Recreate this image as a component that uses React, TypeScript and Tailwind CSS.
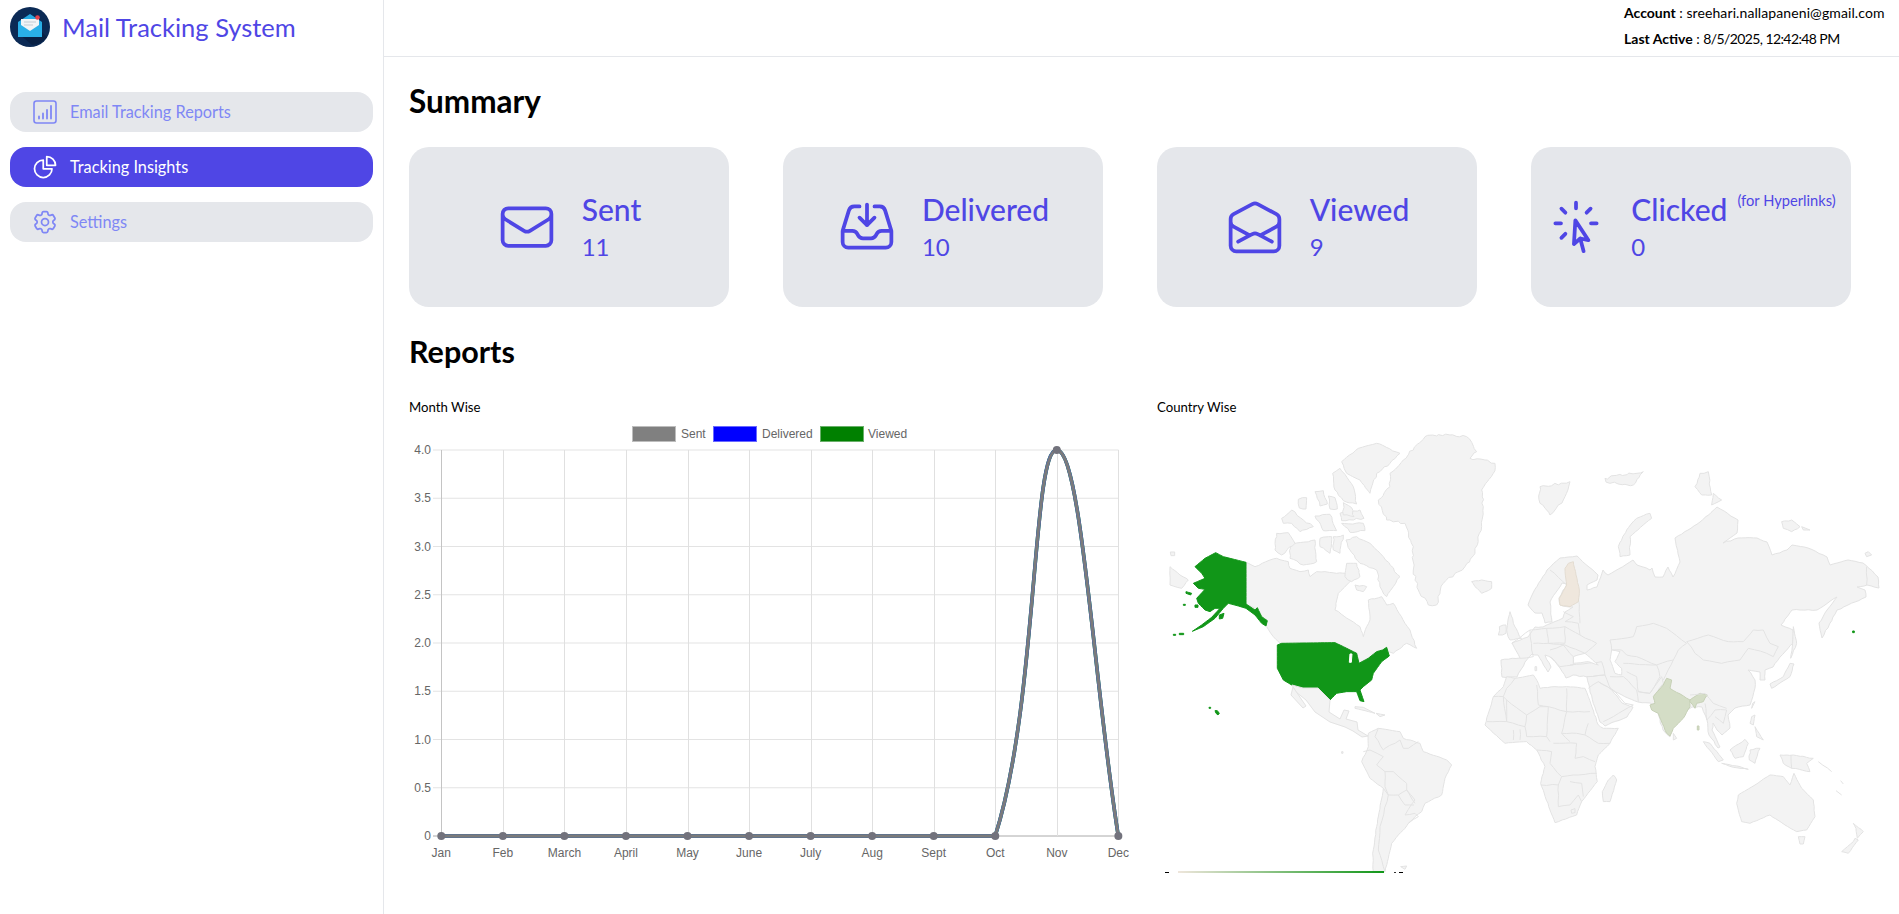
import React from "react";
import { HiOutlineEnvelope, HiOutlineInboxArrowDown, HiOutlineEnvelopeOpen, HiOutlineCursorArrowRays, HiOutlineChartPie, HiOutlineCog6Tooth } from "react-icons/hi2";

const Logo = () => (
  <svg viewBox="0 0 40 40" className="w-10 h-10 shrink-0">
    <circle cx="20" cy="20" r="20" fill="#0b2a55" />
    <path d="M8 26 L22 38 Q32 37 37 30 L32 25 Z" fill="#082044" />
    <path d="M8 15 L20 7 L32 15 V30 H8 Z" fill="#27a9e1" />
    <path d="M11 12 H29 V22 L20 27 L11 22 Z" fill="#f1f4f6" />
    <path d="M14 15 H26 M14 18 H23" stroke="#c3ccd4" strokeWidth="1" />
    <path d="M8 16 L20 24 L32 16 V30 H8 Z" fill="#29b0e8" />
    <circle cx="27.5" cy="10.5" r="2.3" fill="#e8424a" />
  </svg>
);

const ReportIcon = () => (
  <svg viewBox="0 0 28 28" className="w-7 h-7 shrink-0" fill="none" stroke="currentColor" strokeWidth="1.6" strokeLinecap="round">
    <rect x="3" y="3" width="22" height="22" rx="2.5" />
    <path d="M8 20.5V18.5M12 20.5V15.5M16 20.5V12M20 20.5V8" strokeWidth="1.8" />
  </svg>
);

const nav = [
  { label: "Email Tracking Reports", icon: <ReportIcon />, active: false },
  { label: "Tracking Insights", icon: <HiOutlineChartPie className="w-7 h-7 shrink-0" />, active: true },
  { label: "Settings", icon: <HiOutlineCog6Tooth className="w-7 h-7 shrink-0" />, active: false },
];

const cards = [
  { title: "Sent", value: "11", Icon: HiOutlineEnvelope },
  { title: "Delivered", value: "10", Icon: HiOutlineInboxArrowDown },
  { title: "Viewed", value: "9", Icon: HiOutlineEnvelopeOpen },
  { title: "Clicked", value: "0", Icon: HiOutlineCursorArrowRays, note: "(for Hyperlinks)" },
];

const months = ["Jan", "Feb", "March", "April", "May", "June", "July", "Aug", "Sept", "Oct", "Nov", "Dec"];
const yLabels = ["4.0", "3.5", "3.0", "2.5", "2.0", "1.5", "1.0", "0.5", "0"];
const X0 = 441.3;
const STEP = 61.55;
const Y0 = 450;
const YSTEP = 48.25;
const curve = `M${X0} 836 L995.2 836 C1037.7 703 1032 450 1056.7 450 C1081.3 450 1093.7 682 1118.3 836`;

const Chart = () => (
  <svg viewBox="409 420 740 453" className="block w-[740px] h-[453px] mt-[3px]" fontFamily="'Liberation Sans', Arial, sans-serif" fontSize="12" fill="#666">
    {yLabels.map((l, i) => (
      <g key={l}>
        <line x1="433" x2="1118.5" y1={Y0 + i * YSTEP} y2={Y0 + i * YSTEP} stroke={i === 8 ? "#aaaaaa" : "#e3e3e3"} />
        <text x="431" y={Y0 + i * YSTEP + 4} textAnchor="end">{l}</text>
      </g>
    ))}
    {months.map((m, i) => (
      <g key={m}>
        <line x1={Math.round(X0 + i * STEP) + 0.5} x2={Math.round(X0 + i * STEP) + 0.5} y1="450" y2="836" stroke={i === 0 ? "#c4c4c4" : "#e0e0e0"} />
        <text x={X0 + i * STEP} y="857" textAnchor="middle">{m}</text>
      </g>
    ))}
    <text x="780" y="885" textAnchor="middle">Month</text>
    <rect x="632.5" y="426.5" width="43" height="15" fill="#808080" stroke="#bdbdbd" />
    <text x="681" y="438">Sent</text>
    <rect x="713.5" y="426.5" width="43" height="15" fill="#0000ff" stroke="#6a6aff" />
    <text x="762" y="438">Delivered</text>
    <rect x="820.5" y="426.5" width="43" height="15" fill="#008000" stroke="#6ab06a" />
    <text x="868" y="438">Viewed</text>
    <path d={curve} fill="none" stroke="#008000" strokeWidth="3.6" />
    <path d={curve} fill="none" stroke="#5060c0" strokeWidth="3.6" />
    <path d={curve} fill="none" stroke="#7b7b7b" strokeWidth="2.8" />
    {months.map((m, i) => (
      <circle key={m} cx={X0 + i * STEP} cy={i === 10 ? 450 : 836} r="4" fill="#72727c" />
    ))}
  </svg>
);

// Roughens a hand-traced outline so coasts look like map data rather than straight chords.
const rough = (s: string, seg: number, amp: number, closed: boolean) => {
  const pts = s.trim().split(/\s+/).map((q) => q.split(",").map(Number));
  const out: string[] = [];
  const n = pts.length;
  const last = closed ? n : n - 1;
  for (let i = 0; i < last; i++) {
    const [ax, ay] = pts[i];
    const [bx, by] = pts[(i + 1) % n];
    const len = Math.hypot(bx - ax, by - ay);
    const k = Math.max(1, Math.round(len / seg));
    for (let j = 0; j < k; j++) {
      const t = j / k;
      const h = Math.sin(ax * 12.9898 + ay * 78.233 + j * 37.719) * 43758.5453;
      const r = h - Math.floor(h) - 0.5;
      const h2 = Math.sin(ay * 39.346 + ax * 11.135 + j * 91.17) * 24634.6345;
      const r2 = h2 - Math.floor(h2) - 0.5;
      const off = j === 0 ? 0 : amp;
      out.push(`${(ax + (bx - ax) * t + r * off).toFixed(1)},${(ay + (by - ay) * t + r2 * off).toFixed(1)}`);
    }
  }
  if (!closed) out.push(pts[n - 1].join(","));
  return out.join(" ");
};

const P = ({ p, a = 5 }: { p: string; a?: number }) => <polygon points={rough(p, 11, a, true)} />;
const L = ({ p }: { p: string }) => <polyline points={rough(p, 18, 3, false)} fill="none" />;
const Z = ({ x, y, children }: { x: number; y: number; children: React.ReactNode }) => (
  <g transform={`translate(${x} ${y}) scale(0.3333)`} strokeWidth="3" strokeLinejoin="round">{children}</g>
);

const eurasia = "1502,677 1501,660 1520,658 1512,643 1528,637 1535,627 1541,627 1543,627 1563,618 1565,612 1573,607 1570,607 1560,605 1559,598 1567,584 1562,583 1550,602 1552,622 1545,623 1542,613 1535,613 1528,605 1533,593 1547,570 1560,558 1577,556 1598,575 1597,580 1587,585 1587,590 1597,587 1603,570 1608,575 1633,560 1637,565 1650,570 1652,568 1655,577 1663,577 1668,567 1673,577 1680,562 1675,538 1688,530 1700,522 1717,507 1738,520 1737,533 1723,543 1738,538 1757,538 1767,542 1772,555 1787,550 1792,545 1808,548 1827,557 1830,565 1848,560 1863,563 1878,577 1879,588 1867,585 1857,587 1865,590 1866,597 1848,605 1837,610 1822,638 1819,623 1827,610 1837,597 1817,610 1792,610 1781,625 1793,630 1793,643 1780,657 1773,667 1765,670 1765,680 1760,680 1760,672 1748,670 1755,680 1755,688 1750,705 1735,708 1728,715 1730,728 1722,735 1717,730 1713,723 1712,730 1720,747 1718,748 1709,735 1707,720 1702,707 1692,707 1673,722 1670,737 1663,730 1655,705 1650,703 1638,702 1628,698 1622,695 1612,690 1622,703 1633,707 1627,717 1605,726 1600,722 1590,692 1589,685 1587,677 1573,675 1566,678 1560,668 1552,658 1545,655 1551,667 1548,672 1538,655 1532,654 1525,662 1517,677";

const WorldMap = () => (
  <svg viewBox="1157 420 742 453" className="block w-[742px] h-[453px] mt-[3px]" fill="#f3f3f3" stroke="#e3e3e3">
    <Z x={1160} y={430}>
      <P p="258,397 285,410 330,390 350,385 385,395 390,415 420,425 445,420 450,440 470,425 495,425 530,430 560,430 575,450 560,465 535,490 525,540 570,570 600,590 610,620 620,590 630,570 625,510 665,500 680,525 700,520 735,580 750,600 770,655 740,640 700,670 668,660 650,665 625,685 597,700 590,670 550,650 525,638 360,640 340,620 320,590 305,560 285,535 258,522" a={3} />
      <P p="560,400 590,400 600,440 575,455 555,440" />
      <P p="585,465 620,470 610,485 590,480" />
      <P p="590,320 630,340 670,380 720,440 700,470 680,500 660,470 650,420 600,400 570,360 558,330" />
      <P p="390,345 465,330 470,395 430,405 390,385" />
      <P p="350,310 385,308 405,340 365,375 345,360" />
      <P p="480,325 515,320 510,370 480,350" />
      <P p="520,320 550,315 540,370 520,360" />
      <P p="595,55 650,40 720,70 690,100 650,130 630,190 600,150 560,130 545,95" />
      <P p="518,130 540,115 580,170 590,222 550,212 525,180" />
      <P p="540,250 600,240 612,265 545,272" />
      <P p="465,185 490,182 502,222 480,228" />
      <P p="415,208 440,203 438,237 418,234" />
      <P p="365,265 395,240 430,270 460,290 420,305 395,280 370,280" />
      <P p="465,258 510,253 530,302 490,302" />
      <P p="545,280 610,280 615,302 570,307" />
      <P p="505,198 525,203 532,237 510,237" />
      <P p="550,218 575,233 582,260 550,255" />
      <P p="795,20 870,15 920,20 950,65 930,85 975,90 1005,100 1000,130 965,180 970,230 965,290 945,370 915,410 850,460 830,525 805,525 775,480 760,420 760,350 735,280 680,270 655,210 690,170 690,130 730,90" a={7} />
      <P p="935,455 965,450 995,455 995,475 965,490 945,470" a={3} />
      <P p="30,410 60,435 85,450 65,475 30,465" a={3} />
      <P p="31,366 44,366 44,377 33,377" a={0} />
      <g fill="#119618" stroke="#119618">
        <P p="167,368 190,380 258,397 258,522 285,540 292,533 305,560 322,572 318,588 305,580 285,555 258,535 235,528 205,520 190,535 165,565 130,590 97,604 125,585 155,562 180,535 165,535 150,545 135,540 115,520 110,505 135,478 115,475 100,460 135,445 125,430 105,410 135,385" a={0} />
        <P p="352,645 365,640 525,638 550,650 590,670 597,700 625,685 650,665 668,660 680,652 688,678 665,695 640,730 635,750 610,770 600,780 612,815 600,812 590,785 560,785 530,790 510,810 495,795 470,775 430,775 395,765 370,750 352,715" a={0} />
        <P p="78,485 95,490 92,495 78,490" a={0} />
        <P p="178,555 192,550 188,565 178,567" a={0} />
        <P p="70,523 76,523 76,526 70,526" a={0} />
        <P p="105,525 114,525 114,532 105,532" a={0} />
        <P p="40,613 47,613 47,616 40,616" a={0} />
        <P p="58,610 71,610 71,614 58,614" a={0} />
        <P p="147,832 152,832 152,835 147,835" a={0} />
        <P p="165,842 172,842 178,850 174,855 168,850" a={0} />
      </g>
      <polygon points="570,672 576,672 574,697 568,697" fill="#fff" stroke="#fff" />
    </Z>
    <Z x={1290} y={700}>
      <P p="235,100 265,85 330,95 340,115 390,130 400,155 470,180 485,195 465,235 455,285 405,310 395,335 375,350 355,370 345,385 325,405 305,430 295,475 285,515 250,515 248,460 260,380 280,265 240,235 215,185 235,140" a={2} />
      <L p="265,85 255,110 280,150 285,145 330,120 340,145 355,145 385,125" />
      <L p="220,155 240,150 280,170 260,195 285,215 310,215 350,250 350,270 375,310" />
      <L p="285,215 285,260 295,285 325,285 345,315 372,315" />
      <L p="280,265 295,285 270,380 265,450 285,515" />
      <L p="345,345 375,340 385,350 355,370" />
      <L p="325,285 350,270 375,300 345,345" />
      <P p="195,20 220,22 255,40 225,32 195,25" a={0} />
      <P p="258,40 285,45 270,50" a={0} />
      <P p="332,500 350,498 345,508" a={0} />
      <P p="155,155 159,155 159,160 155,160" a={0} />
    </Z>
    <polygon points="1292,685 1303,688 1318,688 1330,700 1329,712 1340,719 1344,710 1349,711 1346,719 1357,722 1358,730 1368,736 1362,737 1353,731 1345,727 1330,722 1315,712 1306,700 1296,692" />
    <polygon points="1293,687 1306,706 1303,708 1291,695" />
    <polygon points={rough(eurasia, 4, 1, true)} />
    <Z x={1470} y={480}>
      <P p="110,590 135,595 190,585 205,610 210,625 255,620 290,620 345,625 355,650 385,735 400,745 445,745 420,790 385,825 375,860 382,905 335,965 320,1005 255,1028 240,990 212,910 225,860 200,810 170,785 105,790 45,735 70,650 100,620" a={2} />
      <P p="430,885 440,900 420,965 400,965 397,935 415,900" a={2} />
      <L p="70,650 100,650 110,660 170,705 210,680 235,680 290,695 290,625" />
      <L p="100,650 110,725 50,725" />
      <L p="110,660 110,725 165,740 170,705" />
      <L p="135,595 110,625 100,650" />
      <L p="200,615 205,675 235,680" />
      <L p="235,680 230,770" />
      <L p="165,740 170,770 230,770 240,785" />
      <L p="130,750 130,780" />
      <L p="150,748 150,780" />
      <L p="290,695 275,760 300,785" />
      <L p="360,695 290,695" />
      <L p="275,760 320,760 345,765 355,730" />
      <L p="345,765 385,790 420,790" />
      <L p="250,790 320,790 315,835 340,830 375,845" />
      <L p="200,810 245,815 240,850 275,890 310,885 380,880" />
      <L p="212,915 265,915 265,980 300,975 325,945 335,965" />
      <L p="275,890 265,915" />
      <L p="300,905 335,910 340,950" />
      <P p="303,990 315,986 315,998 305,1000" a={0} />
      <P p="120,395 130,430 155,475 120,480 110,450" />
      <P p="88,440 108,435 108,460 85,465" />
      <P p="210,20 300,5 280,60 240,105 210,70" a={8} />
      <P p="540,100 545,115 480,170 480,225 450,230 445,200 470,150 500,115" a={4} />
      <L p="125,490 180,450 185,510 190,530 150,535" />
      <L p="180,450 230,445 235,490 190,490" />
      <L p="230,445 285,440 285,490 235,490" />
      <L p="285,440 330,465 380,490 345,520 285,495" />
      <L p="285,425 325,430 330,465" />
      <L p="280,395 310,410 285,425" />
      <L p="325,340 330,430" />
      <L p="240,510 280,495 310,530 310,555 270,560 240,530" />
      <L p="235,490 285,495" />
      <L p="300,555 395,545 405,585 350,590" />
      <L p="420,590 460,590 500,630 505,665" />
      <L p="350,590 405,585 425,630 385,605" />
      <L p="355,625 385,605 430,630 465,670 490,675 400,725" />
      <L p="460,550 560,555 570,590 540,640 505,635 500,590 470,575" />
      <L p="505,635 540,640 575,590 580,610 550,650 552,660" />
      <L p="420,480 490,470 500,440 550,430 590,445 650,490" />
      <L p="420,480 425,510 455,510 470,525 500,530 560,555 610,540 625,510 650,490" />
      <L p="610,540 580,600" />
      <L p="240,270 290,315" />
      <P p="195,560 200,560 200,572 195,572" a={0} />
      <g fill="#fff">
        <P p="425,510 450,515 435,545 455,565 455,585 435,580 420,540" a={2} />
        <P p="310,530 345,520 385,555 355,545 310,550" a={2} />
      </g>
      <g fill="#efe7dd" stroke="#e3dcd1">
        <P p="295,250 310,245 318,285 328,330 325,365 300,380 270,375 268,355 290,315 285,265" a={2} />
      </g>
      <g fill="#d4ddc6" stroke="#c6d0b6">
        <P p="590,595 605,600 600,625 660,660 660,680 640,715 610,745 600,768 590,760 565,700 545,690 540,675 555,670 550,650 580,615" a={2} />
        <P p="660,660 690,640 712,645 700,665 680,670 675,685 660,665" a={2} />
        <P p="682,738 687,738 687,750 682,750" a={0} />
      </g>
    </Z>
    <Z x={1600} y={470}>
      <P p="15,25 130,5 100,45 30,40" a={9} />
      <P p="300,10 325,5 335,75 305,75 285,50" a={5} />
      <P p="340,70 365,90 335,105" a={2} />
      <P p="545,155 575,150 600,170 575,185 550,175" a={3} />
      <P p="605,170 630,180 610,180" a={0} />
      <P p="795,250 805,245 815,255 800,260" a={0} />
      <P p="580,470 590,520 572,565 578,520" a={2} />
      <L p="800,290 800,345" />
      <L p="260,515 325,495 385,515 430,515 460,480 490,480 510,520 535,530 520,560 500,550 445,535 420,570 365,580 310,570 285,550 260,515" />
      <g fill="#119618" stroke="#119618"><P p="758,483 763,483 763,488 758,488" a={0} /></g>
    </Z>
    <Z x={1620} y={660}>
      <L p="210,105 255,100 280,130 320,145" />
      <L p="255,130 260,180 285,150 320,150 310,190 285,170" />
      <P p="510,10 522,12 510,50 455,85 450,72 490,50" a={2} />
      <P p="398,130 405,125 395,145" a={0} />
      <P p="160,220 170,235 160,240" a={0} />
      <P p="250,245 270,250 310,300 295,305" a={2} />
      <P p="305,310 360,320 385,328 340,322" a={2} />
      <P p="330,270 375,238 385,250 370,290 345,295" a={3} />
      <P p="390,270 420,265 405,310 388,300" a={4} />
      <P p="395,170 405,165 400,195 390,190" a={2} />
      <P p="405,200 430,240 410,230" a={2} />
      <P p="480,285 520,285 580,295 560,310 570,335 515,325 490,310" a={3} />
      <L p="513,285 515,325" />
      <P p="355,405 405,375 450,345 490,350 510,375 522,340 545,385 580,420 585,470 560,510 530,515 495,495 450,465 390,490 365,485 350,430" a={2} />
      <P p="535,530 555,530 550,552 540,552" a={0} />
      <P p="700,490 730,515 712,535 708,505" a={2} />
      <P p="705,535 700,545 665,575 685,580 715,540" a={2} />
      <L p="595,305 635,335" />
      <L p="648,392 665,405" />
      <L p="662,362 670,372" />
    </Z>
    <g stroke="none">
      <rect x="1178" y="871" width="206" height="2" fill="url(#lg)" />
      <rect x="1165" y="872" width="4" height="1" fill="#000" />
      <rect x="1394" y="872" width="2" height="1" fill="#333" />
      <rect x="1399" y="872" width="4" height="1" fill="#000" />
    </g>
    <defs>
      <linearGradient id="lg">
        <stop offset="0" stopColor="#efe6dc" />
        <stop offset="1" stopColor="#109618" />
      </linearGradient>
    </defs>
  </svg>
);

export default function App() {
  return (
    <div className="flex h-screen overflow-hidden bg-white text-black [font-family:Lato,'Noto_Sans',sans-serif]">
      <aside className="w-[384px] shrink-0 border-r border-gray-200 pl-[10px] pr-[10px]">
        <div className="flex items-center gap-3 pt-[7px] h-[47px]">
          <Logo />
          <span className="text-[25.5px] leading-8 text-[#4f46e5]">Mail Tracking System</span>
        </div>
        <nav className="mt-[45px] flex flex-col gap-[15px]">
          {nav.map((n) => (
            <div key={n.label} className={`flex items-center gap-[11px] h-10 pl-[21px] rounded-2xl text-[16.3px] ${n.active ? "bg-[#4f46e5] text-white" : "bg-gray-200 text-[#7f87f5]"}`}>
              {n.icon}
              <span>{n.label}</span>
            </div>
          ))}
        </nav>
      </aside>
      <main className="flex-1 min-w-0">
        <header className="h-[57px] border-b border-gray-200 flex justify-end pr-[13px]">
          <div className="w-[262px] pt-[2px] text-sm">
            <p className="leading-[22px] whitespace-nowrap"><b className="font-bold">Account</b> : <span className="tracking-[0.1px]">sreehari.nallapaneni@gmail.com</span></p>
            <p className="mt-[4px] leading-[22px] whitespace-nowrap"><b className="font-bold">Last Active</b> : <span className="tracking-[-0.6px]">8/5/2025, 12:42:48 PM</span></p>
          </div>
        </header>
        <div className="pl-[25px]">
          <h2 className="mt-[26px] text-[31.5px] leading-9 font-bold">Summary</h2>
          <div className="mt-[28px] flex gap-[54px]">
            {cards.map(({ title, value, Icon, note }) => (
              <div key={title} className="w-[320px] h-40 rounded-[20px] bg-gray-200 flex items-center justify-center gap-[25px] text-[#4f46e5]">
                <Icon className="w-[60px] h-[60px] shrink-0" />
                <div className="whitespace-nowrap -mt-[2px]">
                  <div className="flex items-start">
                    <span className="text-[30px] leading-10 font-medium">{title}</span>
                    {note && <span className="ml-[10px] mt-[1px] text-[14.7px] leading-5">{note}</span>}
                  </div>
                  <div className="mt-[2px] text-2xl leading-8">{value}</div>
                </div>
              </div>
            ))}
          </div>
          <h2 className="mt-[26px] text-[30.5px] leading-9 font-bold">Reports</h2>
          <div className="mt-[28px] flex">
            <div className="w-[748px] shrink-0">
              <h3 className="text-[13.2px] leading-5">Month Wise</h3>
              <Chart />
            </div>
            <div className="flex-1 min-w-0">
              <h3 className="text-[13.2px] leading-5">Country Wise</h3>
              <WorldMap />
            </div>
          </div>
        </div>
      </main>
    </div>
  );
}
